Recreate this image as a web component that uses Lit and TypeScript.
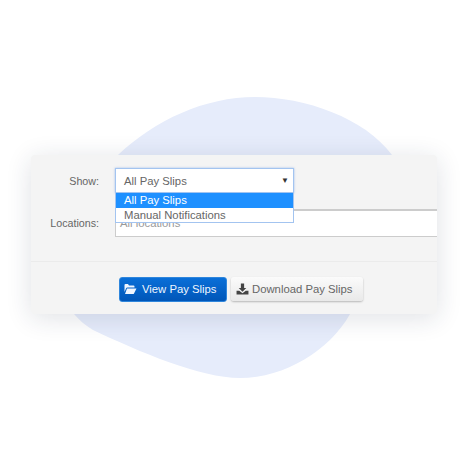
import { LitElement, html, css } from "lit";
import { customElement } from "lit/decorators.js";

@customElement("app-root")
export class AppRoot extends LitElement {
  static styles = css`
    :host {
      display: block;
      position: relative;
      width: 468px;
      height: 468px;
      overflow: hidden;
      background: #fff;
      font-family: "Liberation Sans", Arial, sans-serif;
      color: #555;
    }
    .blob {
      position: absolute;
      left: 0;
      top: 0;
      width: 468px;
      height: 468px;
    }
    .stage {
      position: relative;
      box-sizing: border-box;
      height: 468px;
      padding: 155px 31px 0;
    }
    .card {
      box-sizing: border-box;
      width: 406px;
      height: 159px;
      background: #f4f4f4;
      border-radius: 4px;
      box-shadow: 0 4px 26px rgba(30, 40, 70, 0.14);
      display: flex;
      flex-direction: column;
      overflow: hidden;
    }
    .form {
      height: 107px;
      box-sizing: border-box;
      padding-top: 13px;
      border-bottom: 1px solid #ebebeb;
      display: flex;
      flex-direction: column;
      gap: 16px;
    }
    .row {
      display: grid;
      grid-template-columns: 68px 1fr;
      column-gap: 16px;
      align-items: center;
    }
    .label {
      text-align: right;
      color: #666;
      font-size: 10.7px;
    }
    .select-wrap {
      position: relative;
      width: 179px;
      height: 25px;
      z-index: 2;
    }
    .select {
      box-sizing: border-box;
      height: 25px;
      background: #fff;
      border: 1px solid #a3c4f0;
      box-shadow: 0 0 2px rgba(100, 150, 230, 0.6);
      display: flex;
      align-items: center;
      justify-content: space-between;
      padding: 0 4px 0 8px;
      font-size: 11.3px;
      color: #666;
    }
    .arrow {
      font-size: 8px;
      color: #333;
    }
    .menu {
      position: absolute;
      left: 0;
      right: 0;
      top: 24px;
      box-sizing: border-box;
      height: 31px;
      background: #fff;
      border: 1px solid #a3c4f0;
      font-size: 11.3px;
      color: #666;
    }
    .opt {
      height: 14.5px;
      line-height: 14px;
      padding-left: 8px;
    }
    .opt.on {
      background: #1e90ff;
      color: #fff;
    }
    .input {
      box-sizing: border-box;
      height: 28px;
      background: #fff;
      border-top: 2px solid #ccc;
      border-bottom: 1px solid #ccc;
      border-left: 1px solid #ccc;
      padding: 6px 0 0 4px;
      font-size: 11.3px;
      color: #999;
    }
    .actions {
      flex: 1;
      display: flex;
      align-items: center;
      gap: 4px;
      padding: 2px 0 0 88px;
    }
    .btn {
      box-sizing: border-box;
      height: 25px;
      display: flex;
      align-items: center;
      gap: 5px;
      border-radius: 3px;
      font-size: 11.3px;
    }
    .primary {
      width: 108px;
      padding-left: 4px;
      color: #f0f6ff;
      background: linear-gradient(#0a6fd8, #0056b8);
      border: 1px solid #2f86dc;
    }
    .secondary {
      width: 132px;
      height: 24px;
      padding-left: 5px;
      color: #666;
      background: linear-gradient(#fbfbfb, #e9e9e9);
      box-shadow: 0 1px 2px rgba(0, 0, 0, 0.25);
      gap: 3px;
    }
    svg.icon {
      width: 13px;
      height: 12px;
      fill: currentColor;
      flex: none;
    }
    .secondary svg.icon {
      fill: #444;
    }
  `;

  render() {
    return html`
      <svg class="blob" viewBox="0 0 468 468">
        <path
          d="M255 97 C305 97 365 118 392 155 C402 200 380 265 350 314 C330 350 285 378 240 378 C200 378 140 352 93 330 C85 325 79 320 74 314 C50 280 60 215 118 155 C155 120 205 97 255 97 Z"
          fill="#e6ecfb"
        />
      </svg>
      <div class="stage">
        <div class="card">
          <div class="form">
            <div class="row">
              <div class="label">Show:</div>
              <div class="select-wrap">
                <div class="select"><span>All Pay Slips</span><span class="arrow">▼</span></div>
                <div class="menu">
                  <div class="opt on">All Pay Slips</div>
                  <div class="opt">Manual Notifications</div>
                </div>
              </div>
            </div>
            <div class="row">
              <div class="label">Locations:</div>
              <div class="input">All locations</div>
            </div>
          </div>
          <div class="actions">
            <div class="btn primary">
              <svg class="icon" viewBox="0 0 26 22">
                <path d="M1 17 V3 a2 2 0 0 1 2-2 h5 l2 3 h9 a2 2 0 0 1 2 2 v2 H7 a3 3 0 0 0-3 2 Z" />
                <path d="M6 10 H25 L20 20 a2 2 0 0 1-2 1 H2 Z" />
              </svg>
              <span>View Pay Slips</span>
            </div>
            <div class="btn secondary">
              <svg class="icon" viewBox="0 0 24 22">
                <path d="M9 1 h6 v8 h4 l-7 7 -7-7 h4 Z" />
                <path d="M1 14 h5 l6 5 6-5 h5 v7 H1 Z" />
              </svg>
              <span>Download Pay Slips</span>
            </div>
          </div>
        </div>
      </div>
    `;
  }
}
